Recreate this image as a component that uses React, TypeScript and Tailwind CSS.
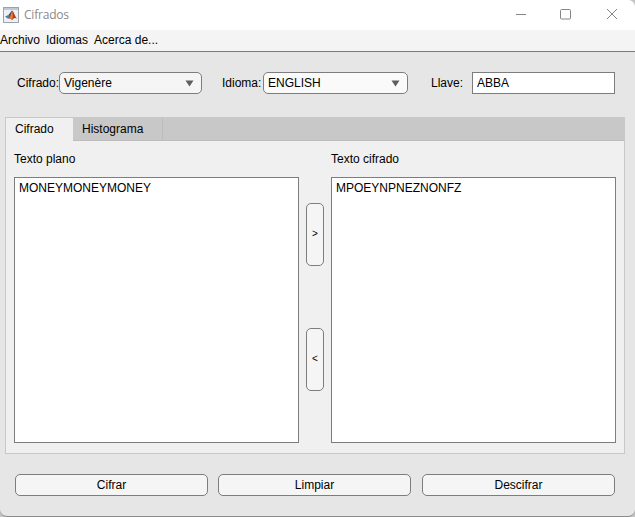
import React, { useState } from "react";

const font = "font-['Liberation_Sans',Arial,sans-serif]";

function MatlabIcon() {
  return (
    <svg width="16" height="16" viewBox="0 0 16 16">
      <rect x="0.5" y="0.5" width="15" height="15" fill="#eef1f4" stroke="#98a3ad" />
      <rect x="1" y="1" width="14" height="2" fill="#b9cad8" />
      <path d="M2 9.6 L5.3 8 L7.4 9.4 L5 11.8 Z" fill="#4a7fa8" />
      <path d="M5.3 8 C7 7.2 7.4 4.8 9 3.6 L7.4 9.6 Z" fill="#36476b" />
      <path d="M9 3.6 C10.6 4.2 11.7 8.7 14 12 C12 10.4 11 10.8 9 13.4 C8.3 11.8 7.5 11 5 11.8 C7.2 10 8 5.5 9 3.6 Z" fill="#b5401f" />
      <path d="M9 4 C9.8 6.5 10.2 9.7 9 13 C8.5 11.3 7.6 11 6.6 11.2 C8 9.2 8.3 6 9 4 Z" fill="#e5863a" />
    </svg>
  );
}

function Combo({ value, className }: { value: string; className: string }) {
  return (
    <button className={`flex h-[22px] items-center justify-between rounded-[5px] border border-[#7d7d7d] pr-[7px] pl-1 ${className}`}>
      <span>{value}</span>
      <svg width="9" height="7" viewBox="0 0 9 7">
        <path d="M0.5 0.5h8L4.5 6.5z" fill="#5e5e5e" />
      </svg>
    </button>
  );
}

function PushButton({ children, className }: { children: React.ReactNode; className: string }) {
  return (
    <button className={`flex items-center justify-center rounded-[5px] border border-[#7d7d7d] bg-[#f5f5f5] ${className}`}>
      {children}
    </button>
  );
}

function TextPane({ label, value }: { label: string; value: string }) {
  const [text, setText] = useState(value);
  return (
    <label className="flex w-[285px] flex-col">
      <span className="h-[26px] pt-px">{label}</span>
      <textarea
        className="h-[266px] w-[285px] resize-none border border-[#7d7d7d] bg-white px-[4px] py-[3px] leading-[14px] outline-none"
        spellCheck={false}
        value={text}
        onChange={(e) => setText(e.target.value)}
      />
    </label>
  );
}

export default function App() {
  const [key, setKey] = useState("ABBA");
  return (
    <div className="h-[517px] w-[635px] overflow-hidden bg-[#c4c4c4]">
      <div className={`${font} flex h-[517px] w-[635px] flex-col overflow-hidden rounded-tr-[7px] rounded-b-[7px] border-b border-[#8c8c8c] bg-[#e6e6e6] text-[12px] leading-[14px] text-black`}>
        <header className="flex h-[30px] shrink-0 items-center bg-white pl-[3px]">
          <MatlabIcon />
          <span className="ml-[5px] font-['Open_Sans',sans-serif] text-[12px] tracking-[-0.2px] text-[#8a8a8a]">Cifrados</span>
          <svg className="ml-auto" width="120" height="30" viewBox="0 0 120 30" fill="none" stroke="#858585">
            <path d="M1 14.5h10M47 9.5h7.5q1 0 1 1v7.5q0 1-1 1h-8q-1 0-1-1v-7.5q0-1 1-1zM92 9l10 10M102 9l-10 10" />
          </svg>
        </header>
        <nav className="flex h-[22px] shrink-0 gap-[6px] border-b border-[#7b7b7b] bg-[#f4f4f4] pt-[3px]">
          <span>Archivo</span>
          <span>Idiomas</span>
          <span>Acerca de...</span>
        </nav>
        <div className="mt-5 flex h-[22px] shrink-0 items-center">
          <span className="w-[59px] pl-[17px]">Cifrado:</span>
          <Combo value="Vigenère" className="w-[143px] bg-[#f5f5f5]" />
          <span className="w-[61px] pl-5">Idioma:</span>
          <Combo value="ENGLISH" className="w-[145px] bg-[#fafafa]" />
          <span className="w-16 pl-[23px]">Llave:</span>
          <input
            className="h-[22px] w-[143px] border border-[#7d7d7d] bg-white px-1 outline-none"
            value={key}
            onChange={(e) => setKey(e.target.value)}
          />
        </div>
        <main className="mt-[23px] ml-[5px] h-[337px] w-[620px] shrink-0 border border-[#c8c8c8] bg-[#f0f0f0]">
          <div className="flex h-[23px] bg-[#c8c8c8]">
            <span className="h-[23px] w-[67px] bg-[#f0f0f0] pt-1 pl-[9px]">Cifrado</span>
            <span className="h-[23px] w-[90px] border-r border-b border-[#bdbdbd] pt-1 pl-[9px]">Histograma</span>
            <span className="flex-1 border-b border-[#bdbdbd]" />
          </div>
          <div className="flex pt-[10px] pl-2">
            <TextPane label="Texto plano" value="MONEYMONEYMONEY" />
            <div className="mx-[7px] flex w-[18px] flex-col gap-[62px] pt-[52px] text-[10px]">
              <PushButton className="h-[63px] w-[18px] pb-[2px]">&gt;</PushButton>
              <PushButton className="h-[63px] w-[18px] pb-[2px]">&lt;</PushButton>
            </div>
            <TextPane label="Texto cifrado" value="MPOEYNPNEZNONFZ" />
          </div>
        </main>
        <footer className="mt-5 flex shrink-0 pl-[15px]">
          <PushButton className="h-[22px] w-[193px]">Cifrar</PushButton>
          <PushButton className="ml-[10px] h-[22px] w-[193px]">Limpiar</PushButton>
          <PushButton className="ml-[11px] h-[22px] w-[193px]">Descifrar</PushButton>
        </footer>
      </div>
    </div>
  );
}
